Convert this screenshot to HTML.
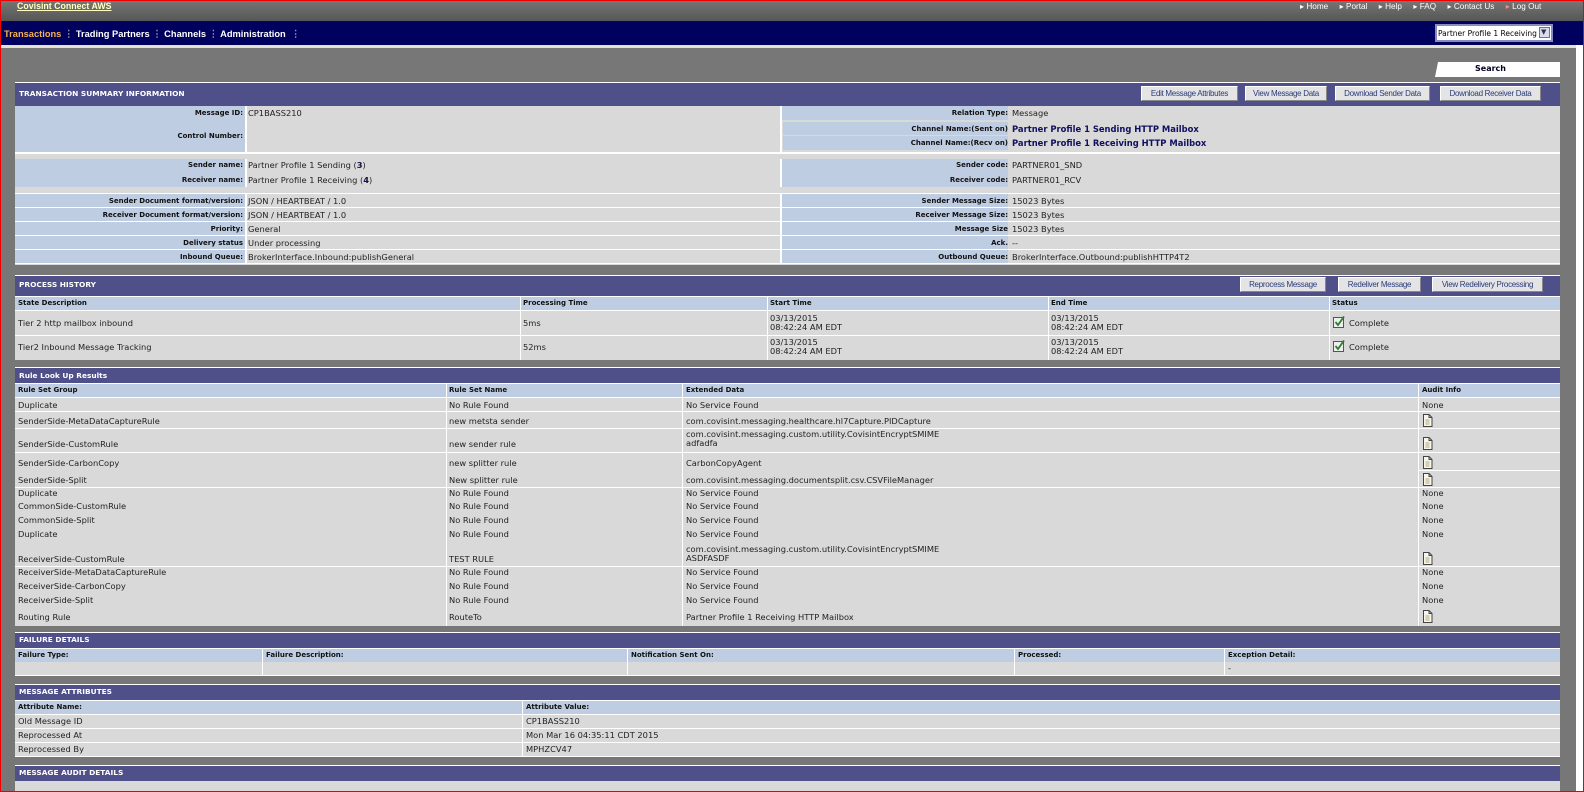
<!DOCTYPE html>
<html><head><meta charset="utf-8"><style>
*{margin:0;padding:0;box-sizing:border-box}
html,body{width:1584px;height:792px;overflow:hidden;background:#fff}
body{position:relative;font-family:"DejaVu Sans","Liberation Sans",sans-serif;font-size:8.3px;color:#222}
.a{position:absolute}
.t{position:absolute;white-space:nowrap;line-height:10px;height:10px}
.b{font-weight:bold;font-size:7px;color:#111}
.h{font-weight:bold;font-size:7.4px;color:#fff}
.btn{position:absolute;background:#e4e4e4;border:1px solid #fff;border-right-color:#888;border-bottom-color:#888;font-family:"Liberation Sans",sans-serif;font-size:8px;color:#2a3a7a;text-align:center;line-height:13px;height:15px;letter-spacing:-0.3px}
.ic{position:absolute}
</style></head><body>
<div class="a" style="left:0;top:0;width:1584px;height:792px;border:1px solid #e00;z-index:50;pointer-events:none"></div>
<div class="a" style="left:0;top:0;width:1584px;height:21px;background:linear-gradient(#777,#565656)"></div>
<div class="a" style="left:0;top:21px;width:1584px;height:1px;background:#111"></div>
<div class="a" style="left:0;top:22px;width:1584px;height:23px;background:#00005e"></div>
<div class="a" style="left:0;top:45px;width:1576px;height:3px;background:#e4e2d2"></div>
<div class="a" style="left:0;top:48px;width:1576px;height:744px;background:#777"></div>
<div class="t" style="left:17px;top:1px;font-family:'Liberation Sans',sans-serif;font-weight:bold;font-size:8.8px;color:#ffffc0;text-decoration:underline">Covisint Connect AWS</div>
<div class="t" style="left:1300px;top:2px;font-family:'Liberation Sans',sans-serif;font-size:8.2px;color:#fff">▸ Home &nbsp;&nbsp;&nbsp;&nbsp;▸ Portal &nbsp;&nbsp;&nbsp;&nbsp;▸ Help &nbsp;&nbsp;&nbsp;&nbsp;▸ FAQ &nbsp;&nbsp;&nbsp;&nbsp;▸ Contact Us &nbsp;&nbsp;&nbsp;&nbsp;<span style="color:#f88">▸</span> Log Out</div>
<div class="t" style="left:4px;top:29px;font-family:'Liberation Sans',sans-serif;font-weight:bold;font-size:9.3px;color:#fff"><span style="color:#f6b24a">Transactions</span> <span style="color:#99a">⋮</span> Trading Partners <span style="color:#99a">⋮</span> Channels <span style="color:#99a">⋮</span> Administration <span style="color:#99a">&nbsp;⋮</span></div>
<div class="a" style="left:1435px;top:24px;width:118px;height:18px;background:#fff;border:2px solid #8a8ac0"></div>
<div class="t" style="left:1438px;top:29px;font-size:7.5px;color:#000">Partner Profile 1 Receiving</div>
<div class="a" style="left:1539px;top:27px;width:11px;height:11px;background:#d8dcf0;border:1px solid #6670b0"></div>
<div class="t" style="left:1541px;top:27px;font-size:7px;color:#334">▼</div>
<div class="a" style="left:1435px;top:62px;width:125px;height:15px;background:#fff;clip-path:polygon(3px 0,100% 0,100% 100%,0 100%)"></div>
<div class="t b" style="left:1475px;top:64px;font-size:8px;color:#002">Search</div>
<div id="c"></div>
<script>
var C=document.getElementById('c'),H='';
function box(x,y,w,h,bg){H+='<div class="a" style="left:'+x+'px;top:'+y+'px;width:'+w+'px;height:'+h+'px;background:'+bg+'"></div>';}
function t(x,y,s,cls,extra){H+='<div class="t '+(cls||'')+'" style="left:'+x+'px;top:'+(y-5)+'px;'+(extra||'')+'">'+s+'</div>';}
function tr(x,y,s){H+='<div class="t b" style="right:'+(1584-x)+'px;top:'+(y-5)+'px">'+s+'</div>';}
var DOC='<svg width="11" height="13" viewBox="0 0 11 13"><path d="M1.5 .5h5.5l3 3v9H1.5z" fill="#f6f6ee" stroke="#444"/><path d="M7 .5v3h3" fill="none" stroke="#444"/><path d="M3.5 6h4M3.5 8h4M3.5 10h4" stroke="#b0a870"/></svg>';
var CHK='<svg width="13" height="12" viewBox="0 0 13 12"><rect x=".5" y="1.5" width="10" height="10" fill="#eee" stroke="#555"/><path d="M2.5 6l2.5 3 6-8.5" fill="none" stroke="#2d7d2d" stroke-width="1.8"/></svg>';
var L=15,W=1545,BL='#4f4f89',LB='#bfcde3',G='#d9d9d9',WH='#fff';
function head(y,h,s,ty){box(L,y-1,W,1,WH);box(L,y,W,h,BL);t(L+4,ty,s,'h');}
function btn(x,y,w,s){H+='<div class="btn" style="left:'+x+'px;top:'+y+'px;width:'+w+'px">'+s+'</div>';}
head(83,23,'TRANSACTION SUMMARY INFORMATION',94);
btn(1141,86,97,'Edit Message Attributes');btn(1245,86,82,'View Message Data');btn(1335,86,95,'Download Sender Data');btn(1440,86,101,'Download Receiver Data');
box(L,106,W,159,G);
box(L,106,230,46,LB);box(781,106,227,14,LB);box(783,122,225,13,LB);box(783,136,225,14,LB);
box(245,106,2,46,WH);box(780,106,2,46,WH);box(L,152,W,2,WH);
box(L,159,230,28,LB);box(781,159,227,28,LB);box(245,159,2,28,WH);box(780,159,2,28,WH);
box(L,193,W,1,WH);
[201,215,229,243,257].forEach(function(y,i){box(L,y-7,230,13,LB);box(781,y-7,227,13,LB);box(L,y+6,W,1,WH);});
box(245,194,2,70,WH);box(780,194,2,70,WH);
tr(243,113,'Message ID:');t(248,113,'CP1BASS210');tr(243,136,'Control Number:');
tr(1008,113,'Relation Type:');t(1012,113,'Message');
tr(1008,129,'Channel Name:(Sent on)');t(1012,129,'Partner Profile 1 Sending HTTP Mailbox','b','font-size:8.4px;color:#101060');
tr(1008,143,'Channel Name:(Recv on)');t(1012,143,'Partner Profile 1 Receiving HTTP Mailbox','b','font-size:8.4px;color:#101060');
tr(243,165,'Sender name:');t(248,165,'Partner Profile 1 Sending (<b style="color:#114">3</b>)');
tr(243,180,'Receiver name:');t(248,180,'Partner Profile 1 Receiving (<b style="color:#114">4</b>)');
tr(1008,165,'Sender code:');t(1012,165,'PARTNER01_SND');tr(1008,180,'Receiver code:');t(1012,180,'PARTNER01_RCV');
var sl=[['Sender Document format/version:','JSON / HEARTBEAT / 1.0','Sender Message Size:','15023 Bytes'],['Receiver Document format/version:','JSON / HEARTBEAT / 1.0','Receiver Message Size:','15023 Bytes'],['Priority:','General','Message Size','15023 Bytes'],['Delivery status','Under processing','Ack.','--'],['Inbound Queue:','BrokerInterface.Inbound:publishGeneral','Outbound Queue:','BrokerInterface.Outbound:publishHTTP4T2']];
sl.forEach(function(r,i){var y=201+i*14;tr(243,y,r[0]);t(248,y,r[1]);tr(1008,y,r[2]);t(1012,y,r[3]);});
head(276,20,'PROCESS HISTORY',285);
btn(1240,277,86,'Reprocess Message');btn(1338,277,83,'Redeliver Message');btn(1432,277,111,'View Redelivery Processing');
box(L,297,W,13,LB);box(L,310,W,50,G);box(L,296,W,1,WH);box(L,310,W,1,WH);box(L,335,W,1,WH);
[520,767,1048,1329].forEach(function(x){box(x,297,1,63,WH);});
var pc=[18,523,770,1051,1332];['State Description','Processing Time','Start Time','End Time','Status'].forEach(function(s,i){t(pc[i],303,s,'b');});
[[323,'Tier 2 http mailbox inbound','5ms'],[347,'Tier2 Inbound Message Tracking','52ms']].forEach(function(r){var y=r[0];t(18,y,r[1]);t(523,y,r[2]);t(770,y-5,'03/13/2015');t(770,y+4,'08:42:24 AM EDT');t(1051,y-5,'03/13/2015');t(1051,y+4,'08:42:24 AM EDT');H+='<div class="ic" style="left:1333px;top:'+(y-7)+'px">'+CHK+'</div>';t(1349,y,'Complete');});
head(368,15,'Rule Look Up Results',376);
box(L,384,W,13,LB);box(L,397,W,229,G);box(L,383,W,1,WH);box(L,397,W,1,WH);
[446,682,1418].forEach(function(x){box(x,384,1,242,WH);});
t(18,390,'Rule Set Group','b');t(449,390,'Rule Set Name','b');t(686,390,'Extended Data','b');t(1422,390,'Audit Info','b');
var rr=[[405,'Duplicate','No Rule Found','No Service Found',0,411],[421,'SenderSide-MetaDataCaptureRule','new metsta sender','com.covisint.messaging.healthcare.hl7Capture.PIDCapture',1,428],[444,'SenderSide-CustomRule','new sender rule','com.covisint.messaging.custom.utility.CovisintEncryptSMIME<br>adfadfa',1,452],[463,'SenderSide-CarbonCopy','new splitter rule','CarbonCopyAgent',1,0],[480,'SenderSide-Split','New splitter rule','com.covisint.messaging.documentsplit.csv.CSVFileManager',1,487],[493,'Duplicate','No Rule Found','No Service Found',0,0],[506,'CommonSide-CustomRule','No Rule Found','No Service Found',0,0],[520,'CommonSide-Split','No Rule Found','No Service Found',0,0],[534,'Duplicate','No Rule Found','No Service Found',0,0],[559,'ReceiverSide-CustomRule','TEST RULE','com.covisint.messaging.custom.utility.CovisintEncryptSMIME<br>ASDFASDF',1,566],[572,'ReceiverSide-MetaDataCaptureRule','No Rule Found','No Service Found',0,0],[586,'ReceiverSide-CarbonCopy','No Rule Found','No Service Found',0,0],[600,'ReceiverSide-Split','No Rule Found','No Service Found',0,0],[617,'Routing Rule','RouteTo','Partner Profile 1 Receiving HTTP Mailbox',1,0]];
rr.forEach(function(r){var y=r[0];t(18,y,r[1]);t(449,y,r[2]);if(r[3].indexOf('<br>')>0){H+='<div class="t" style="left:686px;top:'+(y-14)+'px;height:20px;line-height:9px">'+r[3]+'</div>';}else t(686,y,r[3]);if(r[4])H+='<div class="ic" style="left:1422px;top:'+(y-7)+'px">'+DOC+'</div>';else t(1422,y,'None');if(r[5])box(L,r[5],W,1,WH);});
box(L,411,1403,1,WH);box(1419,411,141,1,WH);box(1419,470,141,1,WH);
head(633,15,'FAILURE DETAILS',640);
box(L,649,W,13,LB);box(L,662,W,13,G);box(L,648,W,1,WH);box(L,675,W,1,WH);
[262,627,1014,1224].forEach(function(x){box(x,649,1,26,WH);});
[[18,'Failure Type:'],[266,'Failure Description:'],[631,'Notification Sent On:'],[1018,'Processed:'],[1228,'Exception Detail:']].forEach(function(a){t(a[0],655,a[1],'b');});
t(1228,668,'-');
head(685,15,'MESSAGE ATTRIBUTES',692);
box(L,701,W,13,LB);box(L,714,W,42,G);box(L,700,W,1,WH);box(L,714,W,1,WH);box(L,728,W,1,WH);box(L,742,W,1,WH);box(L,756,W,1,WH);
box(522,701,1,55,WH);
t(18,707,'Attribute Name:','b');t(526,707,'Attribute Value:','b');
[[721,'Old Message ID','CP1BASS210'],[735,'Reprocessed At','Mon Mar 16 04:35:11 CDT 2015'],[749,'Reprocessed By','MPHZCV47']].forEach(function(r){t(18,r[0],r[1]);t(526,r[0],r[2]);});
head(766,15,'MESSAGE AUDIT DETAILS',773);
box(L,781,W,11,G);
C.innerHTML=H;
</script>
</body></html>
